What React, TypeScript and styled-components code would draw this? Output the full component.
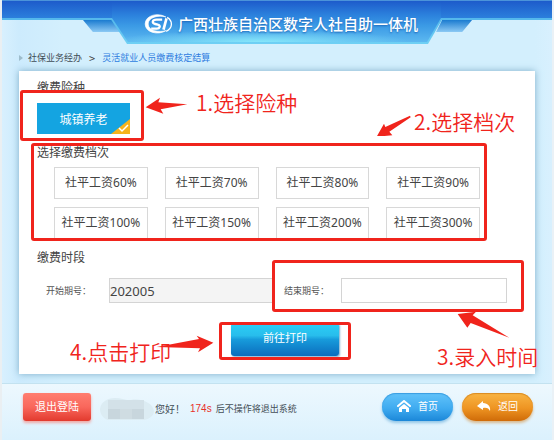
import React from "react";
import styled, { createGlobalStyle, css } from "styled-components";

const sans = `"Noto Sans", "Noto Sans CJK SC", sans-serif`;
const cjk = `"Noto Sans CJK SC", sans-serif`;
const red = "#f0241c";

const GlobalStyle = createGlobalStyle`
  * { box-sizing: border-box; }
  body { margin: 0; background: #fff; font-family: ${sans}; color: #444; }
  button, input { font-family: inherit; margin: 0; }
  h1, h2, p { margin: 0; font-weight: 400; }
`;

const Page = styled.div`
  display: flex;
  flex-direction: column;
  min-height: calc(100vh - 1px);
  border-left: 2px solid #eaeff2;
  border-right: 2px solid #eaf1f6;
  background: linear-gradient(90deg, #d8f0fe, #cdebfd 17px, #d3effd 60px, #d3effd calc(100% - 17px), #d8f0fe);
`;

const Header = styled.header`
  position: relative;
  height: 44px;
  display: flex;
  justify-content: center;
`;

const HeaderBar = styled.div`
  position: absolute;
  inset: 0 0 auto;
  height: 20px;
  border-top: 1px solid #4b93da;
  border-bottom: 2px solid #54b8ec;
  background: linear-gradient(#1d5bcb, #2b7fdc);
`;

const Wing = styled.div<{ $right?: boolean }>`
  position: absolute;
  top: 20px;
  width: 38px;
  height: 12px;
  left: ${(p) => (p.$right ? "calc(50% + 159px)" : "calc(50% - 194px)")};
  background: linear-gradient(#1b7bd0, #8cc9f4);
  clip-path: ${(p) =>
    p.$right ? "polygon(16% 0, 95% 0, 69% 100%, 0 100%)" : "polygon(0 0, 79% 0, 100% 100%, 26% 100%)"};
`;

const BannerEdge = styled.div`
  position: absolute;
  top: 18px;
  left: calc(50% - 167px);
  width: 333px;
  height: 26px;
  background: linear-gradient(#54b8ec, #6fd0f4);
  clip-path: polygon(0 0, 100% 0, 318px 100%, 17px 100%);
`;

const Banner = styled.div`
  position: absolute;
  top: 1px;
  left: calc(50% - 165px);
  width: 329px;
  height: 41px;
  background:
    radial-gradient(ellipse 150px 12px at 45% 100%, #86e6fa, transparent),
    linear-gradient(#1d5bcb, #2c82dd 35%, #3b9ae5 60%, #5cb8f0);
  clip-path: polygon(0 0, 100% 0, 100% 17px, 315px 100%, 16px 100%, 0 17px);
`;

const Brand = styled.div`
  position: relative;
  display: flex;
  align-items: center;
  gap: 5px;
  padding-left: 8px;
  height: 48px;
  color: #fff;
`;

const Title = styled.h1`
  font: 500 15px/22px ${cjk};
  white-space: nowrap;
  text-shadow: 0 1px 2px #1b65b8;
`;

const Breadcrumb = styled.nav`
  display: flex;
  align-items: center;
  gap: 5px;
  height: 27px;
  padding-left: 17px;
  font: 9px/14px ${cjk};
`;

const Chevron = styled.span`
  padding: 0 2px;
  font-size: 11px;
`;

const Crumb = styled.a<{ $current?: boolean }>`
  color: ${(p) => (p.$current ? "#2f7de0" : "#3f4c56")};
  text-decoration: none;
`;

const Card = styled.main`
  margin: 0 17px;
  padding: 7px 18px 18px;
  background: #fff;
  box-shadow: 0 0 7px #7fafc9;
`;

const Heading = styled.h2`
  font: 12px/18px ${cjk};
  color: #444;
`;

const Group = styled.section`
  position: relative;
  & + & { margin-top: 9px; }
`;

const TypeButton = styled.button`
  position: relative;
  display: block;
  width: 93px;
  height: 31px;
  margin-top: 7px;
  padding: 0;
  border: 0;
  background: #14a4e1;
  color: #fff;
  font: 12px/18px ${cjk};
`;

const TickCorner = styled.svg`
  position: absolute;
  right: 0;
  bottom: 0;
  width: 19px;
  height: 15px;
`;

const Levels = styled.div`
  display: grid;
  grid-template-columns: repeat(4, minmax(0, 1fr));
  gap: 8px 17px;
  margin: 6px 37px 0 17px;
`;

const LevelButton = styled.button`
  height: 32px;
  padding: 0;
  border: 1px solid #d8d8d8;
  background: #fff;
  color: #444;
  font-size: 12px;
  line-height: 18px;
  white-space: nowrap;
`;

const Fields = styled.div`
  display: grid;
  grid-template-columns: 229px minmax(0, 223px);
  gap: 9px;
  margin: 12px 0 0 9px;
`;

const Field = styled.div`
  position: relative;
  display: flex;
  align-items: center;
`;

const Label = styled.label<{ $narrow?: boolean }>`
  flex: none;
  width: ${(p) => (p.$narrow ? 57 : 63)}px;
  font: 9px/14px ${cjk};
  color: #555;
`;

const PeriodInput = styled.input`
  flex: 1;
  min-width: 0;
  height: 25px;
  padding: 0;
  border: 1px solid #d4d4d4;
  border-radius: 0;
  background: #fff;
  color: #444;
  font-size: 13px;
  &:read-only { background: #f4f4f4; }
`;

const PrintArea = styled.div`
  position: relative;
  width: 108px;
  margin: 20px auto 0 194px;
`;

const PrintButton = styled.button`
  display: block;
  width: 100%;
  height: 33px;
  padding: 0 0 5px;
  border: 0;
  border-radius: 3px;
  background: linear-gradient(#2bd0f6, #28bdec 38%, #179bdb 50%, #0b6dbd);
  box-shadow: 1px 1px 2px #7aaed0;
  color: #fff;
  font: 11px/16px ${cjk};
`;

type Edges = { $t: number; $l: number; $w?: number; $h: number; $r?: number };

const Frame = styled.div<Edges>`
  position: absolute;
  top: ${(p) => p.$t}px;
  left: ${(p) => p.$l}px;
  height: ${(p) => p.$h}px;
  ${(p) => (p.$w !== undefined ? css`width: ${p.$w}px;` : css`right: ${p.$r}px;`)}
  border: 3px solid ${red};
  border-radius: 3px;
  pointer-events: none;
`;

const Note = styled.p<{ $t: number; $l: number }>`
  position: absolute;
  top: ${(p) => p.$t}px;
  left: ${(p) => p.$l}px;
  color: ${red};
  font: 350 21px/28px ${cjk};
  white-space: nowrap;
  pointer-events: none;
`;

const ArrowBox = styled.svg<{ $t: number; $l: number }>`
  position: absolute;
  top: ${(p) => p.$t}px;
  left: ${(p) => p.$l}px;
  fill: ${red};
  pointer-events: none;
`;

const Footer = styled.footer`
  display: flex;
  flex: 1;
  align-items: flex-start;
  margin-top: 9px;
  padding: 9px 19px 18px 21px;
  border-top: 1px solid #c3e2f0;
  background: linear-gradient(#edf8fe, #dbf1fd);
`;

const LogoutButton = styled.button`
  width: 68px;
  height: 28px;
  padding: 0 0 2px;
  border: 0;
  border-radius: 3px;
  background: linear-gradient(#ff7e70, #f9675c 50%, #e23a2e);
  box-shadow: 0 2px 3px #f0a8a5;
  color: #fff;
  font: 11px/16px ${cjk};
`;

const MaskedName = styled.svg`
  width: 54px;
  height: 24px;
  margin: 4px 1px 0 9px;
`;

const Greeting = styled.p`
  display: flex;
  align-items: center;
  margin-top: 8px;
  font: 10px/16px ${cjk};
  color: #444f57;
  white-space: nowrap;
`;

const Countdown = styled.span`
  margin: 0 4px 0 5px;
  color: #e8302a;
  font-family: "Liberation Sans", sans-serif;
`;

const Remark = styled.span`
  font-size: 9px;
`;

const Actions = styled.div`
  display: flex;
  gap: 9px;
  margin-left: auto;
`;

const PillButton = styled.button<{ $tone: "blue" | "orange" }>`
  display: flex;
  align-items: center;
  justify-content: center;
  gap: 7px;
  width: 71px;
  height: 28px;
  padding: 0 0 2px;
  border: 0;
  border-radius: 14px;
  color: #fff;
  font: 10px/16px ${cjk};
  ${(p) =>
    p.$tone === "blue"
      ? css`
          background: linear-gradient(#62c3fa, #3fabf0 55%, #1b87d8);
          box-shadow: 0 2px 3px #93c6e6, inset 0 1px 1px #3a9de0;
        `
      : css`
          background: linear-gradient(#f9b544, #ee9422 55%, #cf6b08);
          box-shadow: 0 2px 3px #d9b98e, inset 0 1px 1px #d98a22;
        `}
`;

function Arrow({ top, left, width, height, points }: { top: number; left: number; width: number; height: number; points: string }) {
  return (
    <ArrowBox $t={top} $l={left} width={width} height={height} viewBox={`0 0 ${width * 3} ${height * 3}`} aria-hidden="true">
      <polygon points={points} />
    </ArrowBox>
  );
}

function Logo() {
  return (
    <svg width="29" height="20" viewBox="0 0 84 60" fill="none" stroke="#fff" aria-hidden="true">
      <path d="M64 9C40-6 2 4 2 30c0 25 38 35 62 20C44 56 11 51 11 30 11 10 42 2 64 9Z" fill="#fff" strokeWidth="2" />
      <path d="M68 10c18 11 17 32-3 42" strokeWidth="4" />
      <path d="M53 17H36c-13 0-15 11-4 13l8 2c10 2 6 12-3 12H20" strokeWidth="7" />
      <path d="M66 13l-9 34" strokeWidth="8" />
    </svg>
  );
}

const levels = [60, 70, 80, 90, 100, 150, 200, 300];

export default function App() {
  return (
    <>
      <GlobalStyle />
      <Page>
        <Header>
          <HeaderBar />
          <Wing />
          <Wing $right />
          <BannerEdge />
          <Banner />
          <Brand>
            <Logo />
            <Title>广西壮族自治区数字人社自助一体机</Title>
          </Brand>
        </Header>

        <Breadcrumb aria-label="当前位置">
          <svg width="4" height="6" viewBox="0 0 4 6" aria-hidden="true">
            <path d="M0 0l4 3-4 3z" fill="#9dbccc" />
          </svg>
          <Crumb href="#business">社保业务经办</Crumb>
          <Chevron>&gt;</Chevron>
          <Crumb href="#settlement" $current>灵活就业人员缴费核定结算</Crumb>
        </Breadcrumb>

        <Card>
          <Group>
            <Heading>缴费险种</Heading>
            <TypeButton type="button" aria-pressed="true">
              城镇养老
              <TickCorner viewBox="0 0 19 15" aria-hidden="true">
                <path d="M19 0v15H0z" fill="#f5b31c" />
                <path d="M8 9l3 3 6-6" fill="none" stroke="#fff" strokeWidth="1.5" />
              </TickCorner>
            </TypeButton>
            <Frame $t={12} $l={-17} $w={124} $h={51} />
            <Arrow top={19} left={108} width={43} height={17} points="2,31 45,2 40,16 127,22 47,37 55,50" />
            <Note $t={10} $l={159}>1.选择险种</Note>
          </Group>

          <Group>
            <Heading>选择缴费档次</Heading>
            <Levels>
              {levels.map((level) => (
                <LevelButton type="button" key={level}>社平工资{level}%</LevelButton>
              ))}
            </Levels>
            <Frame $t={0} $l={-6} $r={30} $h={98} />
            <Arrow top={-29} left={339} width={36} height={22} points="2,68 24,29 28,39 102,5 104,10 40,53 49,64" />
            <Note $t={-36} $l={377}>2.选择档次</Note>
          </Group>

          <Group>
            <Heading>缴费时段</Heading>
            <Fields>
              <Field>
                <Label htmlFor="start">开始期号：</Label>
                <PeriodInput id="start" defaultValue="202005" readOnly />
              </Field>
              <Field>
                <Label htmlFor="end" $narrow>结束期号：</Label>
                <PeriodInput id="end" />
                <Frame $t={-18} $l={-12} $r={-17} $h={52} />
                <Arrow top={33} left={173} width={53} height={28} points="2,9 57,2 47,13 157,80 41,36 31,50" />
                <Note $t={64} $l={153}>3.录入时间</Note>
              </Field>
            </Fields>
          </Group>

          <PrintArea>
            <PrintButton type="button">前往打印</PrintButton>
            <Frame $t={-1} $l={-12} $w={132} $h={38} />
            <Note $t={14} $l={-161}>4.点击打印</Note>
            <Arrow top={12} left={-75} width={58} height={18} points="2,36 129,12 122,2 172,23 126,52 132,40" />
          </PrintArea>
        </Card>

        <Footer>
          <LogoutButton type="button">退出登陆</LogoutButton>
          <MaskedName viewBox="0 0 54 24" aria-hidden="true">
            <path d="M0 12C1 5 7 1 15 1c7 0 11 3 16 2 12-2 22 4 23 11 0 5-5 8-10 9H8C3 21 0 17 0 12z" fill="#dcecf3" />
            <path d="M8 3h36v19H8z" fill="#d3e1e8" />
            <path d="M8 12h12v10H8z M32 12h12v10H32z" fill="#c8d6dd" />
            <path d="M20 12h12v10H20z" fill="#cfdce2" />
          </MaskedName>
          <Greeting>
            您好！<Countdown>174s</Countdown><Remark>后不操作将退出系统</Remark>
          </Greeting>
          <Actions>
            <PillButton type="button" $tone="blue">
              <svg width="14" height="12" viewBox="0 0 14 12" aria-hidden="true">
                <path d="M1 6l6-5 6 5" fill="none" stroke="#fff" strokeWidth="2" strokeLinecap="round" />
                <path d="M7 4l5 4v4H9V9H5v3H2V8z" fill="#fff" />
              </svg>
              首页
            </PillButton>
            <PillButton type="button" $tone="orange">
              <svg width="14" height="12" viewBox="0 0 14 12" aria-hidden="true">
                <path d="M6 1L0 6l6 4V8c3-1 6 0 7 3 1-4-2-8-7-8z" fill="#fff" />
              </svg>
              返回
            </PillButton>
          </Actions>
        </Footer>
      </Page>
    </>
  );
}
